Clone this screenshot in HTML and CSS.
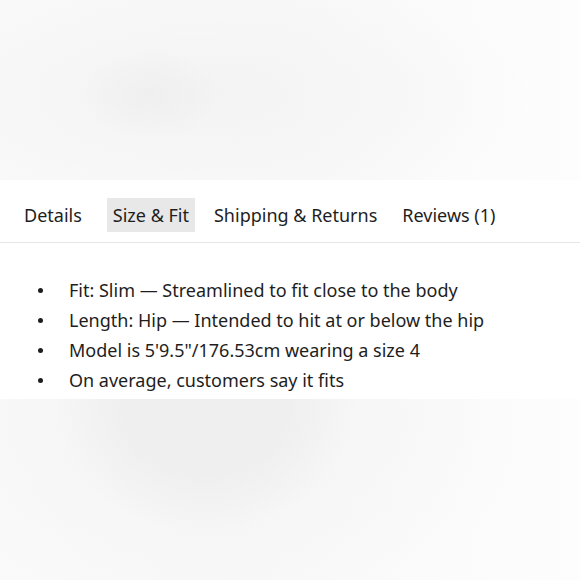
FILE: index.html
```html
<!DOCTYPE html>
<html lang="en">
<head>
<meta charset="utf-8">
<title>Size &amp; Fit</title>
<link rel="stylesheet" href="styles.css">
</head>
<body>
<div class="blur blur-top"></div>
<section class="product-info">
  <nav class="tabs">
    <span class="tab first">Details</span>
    <span class="tab active">Size &amp; Fit</span>
    <span class="tab">Shipping &amp; Returns</span>
    <span class="tab">Reviews (1)</span>
  </nav>
  <ul class="fit-list">
    <li>Fit: Slim — Streamlined to fit close to the body</li>
    <li>Length: Hip — Intended to hit at or below the hip</li>
    <li>Model is 5'9.5"/176.53cm wearing a size 4</li>
    <li>On average, customers say it fits</li>
  </ul>
</section>
<div class="blur blur-bottom"></div>
</body>
</html>
```
FILE: styles.css
```css
html, body {
  margin: 0;
  padding: 0;
  background: #ffffff;
}
body {
  width: 580px;
  height: 580px;
  overflow: hidden;
  font-family: "Noto Sans", "DejaVu Sans", sans-serif;
  color: #1e1e1e;
}
.blur {
  width: 580px;
}
.blur-top {
  height: 180px;
  background:
    radial-gradient(ellipse 70px 45px at 150px 95px, #efefef 0%, rgba(239,239,239,0) 100%),
    radial-gradient(ellipse 330px 130px at 200px 95px, #f3f3f3 0%, rgba(243,243,243,0) 100%),
    linear-gradient(90deg, #fafafa 0%, #f9f9f9 50%, #fdfdfd 100%);
}
.product-info {
  background: #ffffff;
}
.tabs {
  display: flex;
  gap: 13px;
  padding: 18px 0 10px 18px;
  border-bottom: 1px solid #e6e6e6;
}
.tab {
  height: 34px;
  line-height: 34px;
  padding: 0 6px;
  font-size: 18px;
  white-space: nowrap;
}
.tab.first {
  margin-right: 6px;
}
.tab.active {
  background: #e8e8e8;
}
.fit-list {
  list-style: none;
  margin: 0;
  padding: 32px 0 4px 38px;
  font-size: 18px;
  line-height: 30px;
}
.fit-list li {
  display: flex;
  align-items: center;
}
.fit-list li::before {
  content: "";
  width: 5px;
  height: 5px;
  border-radius: 50%;
  background: #1e1e1e;
  margin-right: 26px;
  flex: none;
}
.blur-bottom {
  height: 181px;
  background:
    radial-gradient(ellipse 150px 135px at 205px 0px, #efefef 0%, #efefef 55%, rgba(240,240,240,0) 100%),
    radial-gradient(ellipse 330px 190px at 210px 20px, #f4f4f4 0%, rgba(244,244,244,0) 100%),
    linear-gradient(90deg, #fafafa 0%, #f8f8f8 40%, #fdfdfd 100%);
}
```
